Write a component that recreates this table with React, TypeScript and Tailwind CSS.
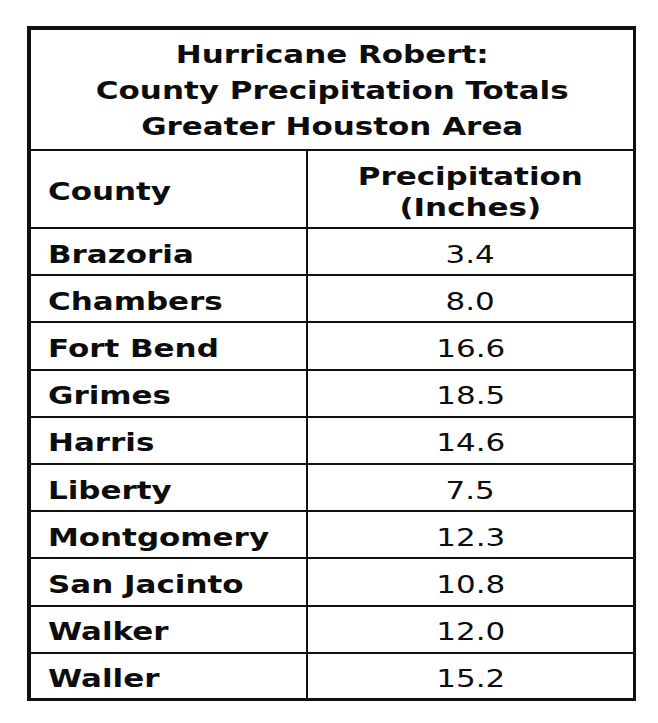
const rows: [string, string][] = [
  ['Brazoria', '3.4'],
  ['Chambers', '8.0'],
  ['Fort Bend', '16.6'],
  ['Grimes', '18.5'],
  ['Harris', '14.6'],
  ['Liberty', '7.5'],
  ['Montgomery', '12.3'],
  ['San Jacinto', '10.8'],
  ['Walker', '12.0'],
  ['Waller', '15.2'],
]

// the source image is a wide Verdana, so stretch DejaVu sideways
function Wide({ children, left }: { children: React.ReactNode; left?: boolean }) {
  return (
    <span className={`inline-block scale-x-[1.29] ${left ? 'origin-left' : 'origin-center'}`}>
      {children}
    </span>
  )
}

export default function App() {
  return (
    <div className="w-[658px] h-[723px] bg-white pt-[26px] pl-[27px] font-['DejaVu_Sans',Verdana,sans-serif] text-[#0d0d0d]">
      <table className="w-[609px] border-collapse border-[#111] border-l-4 border-t-4 border-r-[3px] border-b-[3px]">
        <thead>
          <tr>
            <th
              colSpan={2}
              className="h-[122px] border-b-2 border-[#111] text-center text-[24px] font-bold leading-[36px] pt-[2px]"
            >
              <Wide>
                Hurricane Robert:
                <br />
                County Precipitation Totals
                <br />
                Greater Houston Area
              </Wide>
            </th>
          </tr>
          <tr>
            <th className="h-[78px] w-[278px] border-b-2 border-r-2 border-[#111] pl-[17px] pt-[6px] text-left text-[24px] font-bold">
              <Wide left>County</Wide>
            </th>
            <th className="h-[78px] border-b-2 border-[#111] pt-[8px] text-center text-[24px] font-bold leading-[31px]">
              <Wide>
                Precipitation
                <br />
                (Inches)
              </Wide>
            </th>
          </tr>
        </thead>
        <tbody>
          {rows.map(([county, inches], i) => (
            <tr key={county}>
              <td
                className={`h-[47.2px] border-r-2 border-[#111] pl-[17px] pt-[6px] text-left text-[24px] font-bold ${
                  i < rows.length - 1 ? 'border-b-2' : ''
                }`}
              >
                <Wide left>{county}</Wide>
              </td>
              <td
                className={`h-[47.2px] border-[#111] pt-[6px] text-center text-[24px] ${
                  i < rows.length - 1 ? 'border-b-2' : ''
                }`}
              >
                <Wide>{inches}</Wide>
              </td>
            </tr>
          ))}
        </tbody>
      </table>
    </div>
  )
}
